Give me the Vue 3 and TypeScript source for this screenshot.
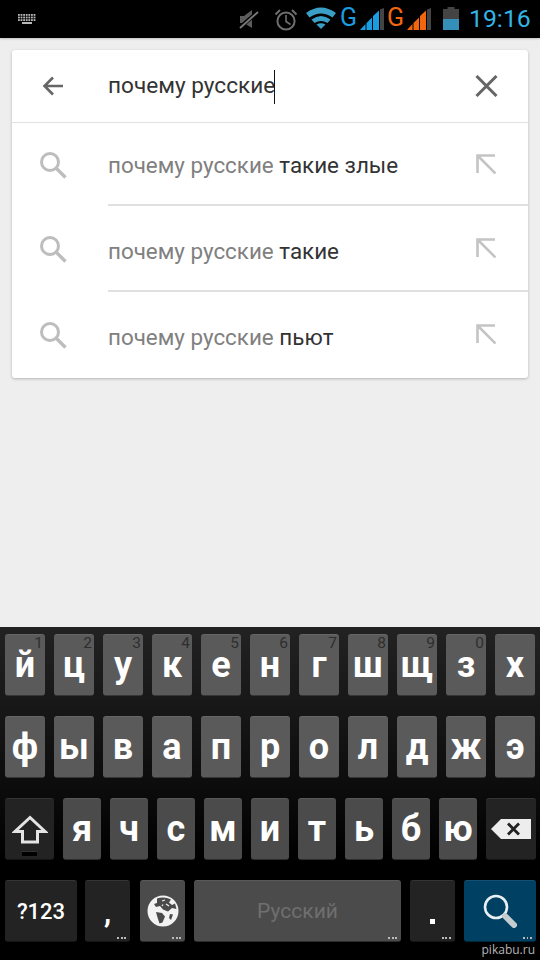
<template>
  <div class="phone">
    <div class="status-bar">
      <svg class="st-kbd" width="18" height="11" viewBox="0 0 18 11">
        <g fill="#b8b8b8">
          <template v-for="r in 3" :key="r">
            <rect v-for="c in 7" :key="c" :x="(c - 1) * 2.6" :y="(r - 1) * 2.6" width="1.8" height="1.8" />
          </template>
          <rect x="4" y="8" width="10" height="2" />
        </g>
      </svg>
      <svg class="st-mute" width="20" height="20" viewBox="0 0 20 20">
        <path d="M1 7h4l8-6v18l-8-5H1z" fill="#5c5c5c" />
        <path d="M0 19L19 3" stroke="#000" stroke-width="4" fill="none" />
        <path d="M1 19L19 3" stroke="#7a7a7a" stroke-width="1.800" fill="none" />
      </svg>
      <svg class="st-alarm" width="24" height="23" viewBox="0 0 24 23" fill="none" stroke="#6e6e6e">
        <circle cx="12" cy="13" r="8.600" stroke-width="2" />
        <path d="M12 7v6.500l4.500 3" stroke-width="1.600" />
        <path d="M1.500 6.500L6 2M22.500 6.500L18 2" stroke-width="2" />
      </svg>
      <svg class="st-wifi" width="30" height="22" viewBox="0 0 30 22">
        <g fill="#3a9fc6">
          <path d="M0 6Q15 -5 30 6L26.500 10.500Q15 2.500 3.500 10.500Z" />
          <path d="M5.500 12.500Q15 5.500 24.500 12.500L21.500 16Q15 12 8.500 16Z" />
          <path d="M10.500 17.500Q15 15 19.500 17.500L15 22Z" />
        </g>
      </svg>
      <span class="st-g blue">G</span>
      <svg class="st-signal" width="24" height="22" viewBox="0 0 24 22">
        <path d="M0 22L5.500 16V22ZM6.500 22V15L12 9.500V22ZM13 22V8L19 2.500V22Z" fill="#1b9be0" />
        <path d="M20 22V1.500L24 0V22Z" fill="#444" />
      </svg>
      <span class="st-g orange">G</span>
      <svg class="st-signal" width="24" height="22" viewBox="0 0 24 22">
        <path d="M0 22L5.500 16V22ZM6.500 22V15L12 9.500V22ZM13 22V8L19 2.500V22Z" fill="#f2660f" />
        <path d="M20 22V1.500L24 0V22Z" fill="#444" />
      </svg>
      <svg class="st-battery" width="16" height="23" viewBox="0 0 16 23">
        <rect x="4.500" y="0" width="7" height="3" fill="#444" />
        <rect x="0" y="2" width="16" height="21" fill="#444" />
        <rect x="0" y="12" width="16" height="11" fill="#3490b8" />
      </svg>
      <span class="st-time">19:16</span>
    </div>

    <div class="content">
      <div class="card">
        <div class="search-row">
          <div class="lead">
            <svg width="22" height="20" viewBox="0 0 22 20" fill="none" stroke="#666" stroke-width="2.600">
              <path d="M21 10H3M11 1.500L2.500 10L11 18.500" />
            </svg>
          </div>
          <div class="query">
            почему русские<span class="caret"></span>
          </div>
          <div class="trail">
            <svg width="23" height="22" viewBox="0 0 23 22" fill="none" stroke="#666" stroke-width="3">
              <path d="M1.500 1L21.500 21M21.500 1L1.500 21" />
            </svg>
          </div>
        </div>
        <div v-for="s in suggestions" :key="s" class="suggest">
          <div class="lead">
            <svg width="28" height="28" viewBox="0 0 28 28" fill="none" stroke="#bdbdbd">
              <circle cx="11" cy="11" r="8.500" stroke-width="3" />
              <path d="M17 17L26.500 26.500" stroke-width="3.400" />
            </svg>
          </div>
          <div class="suggest-text">
            <span class="typed">почему русские </span><span class="rest">{{ s }}</span>
          </div>
          <div class="trail arrow">
            <svg width="20" height="20" viewBox="0 0 20 20" fill="none" stroke="#c4c4c4" stroke-width="2.600">
              <path d="M1.500 19V1.500H19M1.500 1.500L19.500 19.500" />
            </svg>
          </div>
        </div>
      </div>
    </div>

    <div class="keyboard">
      <div class="kb-row">
        <div v-for="k in row1" :key="k.l" class="key top">
          <span class="hint">{{ k.h }}</span><span class="letter">{{ k.l }}</span>
        </div>
      </div>
      <div class="kb-row">
        <div v-for="l in row2" :key="l" class="key top"><span class="letter">{{ l }}</span></div>
      </div>
      <div class="kb-row">
        <div class="key dark shift">
          <svg width="36" height="29" viewBox="0 0 36 29" fill="none" stroke="#e4e4e4" stroke-width="3">
            <path d="M18 2.500L3 16.500H10.500V27H25.500V16.500H33Z" />
          </svg>
          <span class="shift-led"></span>
        </div>
        <div v-for="l in row3" :key="l" class="key low"><span class="letter">{{ l }}</span></div>
        <div class="key dark del">
          <svg width="40" height="20" viewBox="0 0 40 20">
            <path d="M10 0H40V20H10L0 10Z" fill="#ededed" />
            <path d="M17 4.500L28 15.500M28 4.500L17 15.500" stroke="#222" stroke-width="2.800" />
          </svg>
        </div>
      </div>
      <div class="kb-row">
        <div class="key dark sym">?123</div>
        <div class="key dark comma"><span class="comma-mark">,</span><span class="dots"></span></div>
        <div class="key low globe">
          <svg width="32" height="32" viewBox="0 0 32 32">
            <circle cx="16" cy="16" r="15.500" fill="#f2f2f2" />
            <g fill="#4a4a4a">
              <path d="M10 3.500C14 1.800 20 2 24 4.500L22 7.500L25 10L28 8.500L29.500 14L25 13L21 16.500L16 14.500L13 11L9 12L7 9L10 8Z" />
              <path d="M9 17L15 18L18 21.500L15.500 27.500L12.500 28.500L10.500 22.500Z" />
              <path d="M23 19L26 19.500L24 25L22 23Z" />
            </g>
            <path d="M15 6L18 5M19 9L22 11M16 9.500L15 11" stroke="#f2f2f2" stroke-width="1.200" fill="none" />
          </svg>
          <span class="dots"></span>
        </div>
        <div class="key low space">Русский<span class="dots"></span></div>
        <div class="key dark period"><span class="period-dot"></span><span class="dots"></span></div>
        <div class="key go">
          <svg width="34" height="34" viewBox="0 0 34 34" fill="none">
            <circle cx="13" cy="13" r="11" stroke="#e8f0f4" stroke-width="2.600" />
            <path d="M22 22L31 31" stroke="#c4ccd0" stroke-width="6" stroke-linecap="round" />
          </svg>
          <span class="dots"></span>
        </div>
      </div>
      <span class="watermark">pikabu.ru</span>
    </div>
  </div>
</template>

<script setup lang="ts">
const suggestions: string[] = ['такие злые', 'такие', 'пьют']

const row1 = [
  { l: 'й', h: '1' },
  { l: 'ц', h: '2' },
  { l: 'у', h: '3' },
  { l: 'к', h: '4' },
  { l: 'е', h: '5' },
  { l: 'н', h: '6' },
  { l: 'г', h: '7' },
  { l: 'ш', h: '8' },
  { l: 'щ', h: '9' },
  { l: 'з', h: '0' },
  { l: 'х', h: '' }
]
const row2: string[] = ['ф', 'ы', 'в', 'а', 'п', 'р', 'о', 'л', 'д', 'ж', 'э']
const row3: string[] = ['я', 'ч', 'с', 'м', 'и', 'т', 'ь', 'б', 'ю']
</script>

<style>
html, body {
  margin: 0;
  background: #eeeeee;
}
</style>

<style scoped>
.phone {
  width: 540px;
  height: 960px;
  display: flex;
  flex-direction: column;
  overflow: hidden;
  font-family: Roboto, "Noto Sans", sans-serif;
}

.status-bar {
  height: 38px;
  flex: none;
  background: #000;
  display: flex;
  align-items: center;
  padding-left: 18px;
  box-sizing: border-box;
  box-shadow: 0 1px 2px rgba(0, 0, 0, 0.2);
}
.st-mute { margin-left: 203px; }
.st-alarm { margin-left: 15px; }
.st-wifi { margin-left: 8px; margin-top: -3px; }
.st-g {
  font-size: 25px;
  line-height: 28px;
  margin-top: -3px;
  width: 16px;
}
.st-g.blue { color: #1b9be0; margin-left: 4px; }
.st-g.orange { color: #f2660f; margin-left: 3px; }
.st-signal { margin-left: 4px; margin-top: -1px; }
.st-battery { margin-left: 12px; margin-top: -1px; }
.st-time {
  margin-left: 10px;
  font-size: 24.800px;
  line-height: 28px;
  color: #33b5e5;
}

.content {
  flex: 1;
  padding: 12px;
}
.card {
  background: #fff;
  border-radius: 3px;
  box-shadow: 0 1px 3px rgba(0, 0, 0, 0.25);
}
.search-row {
  height: 73px;
  box-sizing: border-box;
  display: flex;
  align-items: center;
  border-bottom: 1px solid #e2e2e2;
}
.lead {
  width: 96px;
  flex: none;
  display: flex;
  justify-content: center;
  padding-right: 14px;
  box-sizing: border-box;
}
.trail {
  width: 84px;
  flex: none;
  display: flex;
  justify-content: center;
  box-sizing: border-box;
}
.trail.arrow { margin-top: -2px; }
.query {
  flex: 1;
  font-size: 22.600px;
  color: #333;
  white-space: nowrap;
  padding-top: 1px;
}
.caret {
  display: inline-block;
  width: 1px;
  height: 34px;
  background: #111;
  vertical-align: middle;
  margin-left: -1px;
}
.suggest {
  height: 86px;
  display: flex;
  align-items: center;
  position: relative;
}
.suggest:nth-child(2) { height: 83px; }
.suggest:not(:last-child)::after {
  content: "";
  position: absolute;
  left: 96px;
  right: 0;
  bottom: 0;
  height: 2px;
  background: #e0e0e0;
}
.suggest-text {
  flex: 1;
  font-size: 22.400px;
  white-space: nowrap;
  padding-top: 3px;
}
.suggest:nth-child(2) .suggest-text { padding-top: 0; }
.typed { color: #808080; }
.rest { color: #333; }

.keyboard {
  position: relative;
  height: 333px;
  flex: none;
  box-sizing: border-box;
  padding: 7px 4px 0 5px;
  background: linear-gradient(#222222, #0c0c0c 48%, #000 70%);
  display: flex;
  flex-direction: column;
  gap: 20px;
}
.kb-row {
  display: flex;
  gap: 9px;
  height: 62px;
}
.key {
  position: relative;
  width: 40px;
  border-radius: 3px;
  display: flex;
  align-items: center;
  justify-content: center;
  color: #fff;
  font-weight: 700;
  box-sizing: border-box;
  border-top: 1px solid rgba(255, 255, 255, 0.08);
  border-bottom: 1px solid rgba(0, 0, 0, 0.4);
}
.letter {
  font-size: 36px;
  line-height: 28px;
}
.key.top { background: #5a5a5a; }
.key.low { background: #4b4b4b; width: 38px; }
.key.dark { background: #232323; }
.hint {
  position: absolute;
  top: 1px;
  right: 2px;
  font-size: 15.500px;
  line-height: 15px;
  font-weight: 400;
  color: #2e2e2e;
}
.key.shift { width: 49px; }
.shift-led {
  position: absolute;
  left: 17px;
  bottom: 3px;
  width: 15px;
  height: 4px;
  background: #000;
  border-top: 1px solid #333;
}
.key.del { width: 50px; }
.key.sym { width: 72px; font-size: 22px; font-weight: 500; }
.key.comma { width: 45px; margin-left: -1px; }
.comma-mark {
  font-size: 29px;
  line-height: 28px;
  margin-top: 4px;
}
.key.globe { width: 45px; margin-left: 1px; }
.key.space {
  width: 207px;
  color: #6f6f6f;
  font-size: 21px;
  font-weight: 400;
}
.key.period { width: 45px; }
.period-dot {
  position: absolute;
  left: 20px;
  top: 38px;
  width: 5px;
  height: 5px;
  background: #fff;
}
.key.go { width: 72px; background: #004163; }
.dots {
  position: absolute;
  right: 4px;
  bottom: 2px;
  width: 9px;
  height: 2px;
  background: repeating-linear-gradient(90deg, #bbb 0 2px, transparent 2px 3.500px);
}
.watermark {
  position: absolute;
  right: 5px;
  bottom: 3px;
  font-size: 12px;
  line-height: 14px;
  color: #b5b5b5;
  font-family: "Open Sans", sans-serif;
}
</style>
